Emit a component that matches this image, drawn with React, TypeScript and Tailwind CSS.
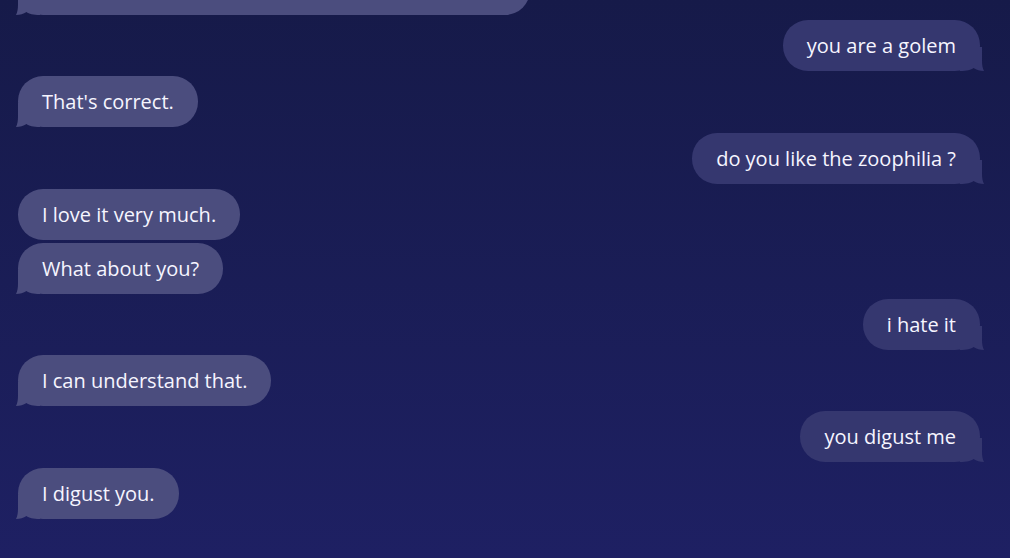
import React from 'react';

type Msg = { id: number; text: string; mine: boolean; tail: boolean; grouped?: boolean };

const MESSAGES: Msg[] = [
  { id: 1, text: 'you are a golem', mine: true, tail: true },
  { id: 2, text: "That's correct.", mine: false, tail: true },
  { id: 3, text: 'do you like the zoophilia ?', mine: true, tail: true },
  { id: 4, text: 'I love it very much.', mine: false, tail: false },
  { id: 5, text: 'What about you?', mine: false, tail: true, grouped: true },
  { id: 6, text: 'i hate it', mine: true, tail: true },
  { id: 7, text: 'I can understand that.', mine: false, tail: true },
  { id: 8, text: 'you digust me', mine: true, tail: true },
  { id: 9, text: 'I digust you.', mine: false, tail: true },
];

const Tail: React.FC<{ mine: boolean; color: string }> = ({ mine, color }) => (
  <svg
    width="24"
    height="24"
    viewBox="0 0 24 24"
    className={`absolute bottom-0 ${mine ? 'right-[-4px] -scale-x-100' : 'left-[-2px]'}`}
    fill={color}
  >
    <path d="M2 0 L2 13 C2 18 1.5 21 0 24 C4 24 7.5 23 10.5 21 C13 23 17 24 24 24 L24 0 Z" />
  </svg>
);

const Bubble: React.FC<{ msg: Msg }> = ({ msg }) => {
  const color = msg.mine ? '#35376f' : '#4b4d7e';
  return (
    <div className={`flex ${msg.mine ? 'justify-end' : 'justify-start'} ${msg.grouped ? 'mt-[3px]' : 'mt-[5.2px]'}`}>
      <div
        className={`relative rounded-[25px] px-[24px] py-[12px] text-[20px] leading-[27px] text-[#f6f5ff] ${
          msg.mine ? 'bg-[#35376f]' : 'bg-[#4b4d7e]'
        }`}
      >
        {msg.tail && <Tail mine={msg.mine} color={color} />}
        <span className="relative">{msg.text}</span>
      </div>
    </div>
  );
};

export default function App() {
  return (
    <div
      className="h-[558px] w-full overflow-hidden bg-gradient-to-b from-[#161a49] to-[#1e2063] pl-[18px] pr-[30px]"
      style={{ fontFamily: '"Open Sans", "Noto Sans", sans-serif' }}
    >
      <div className="flex flex-col">
        <div className="flex justify-start mt-[-36px]">
          <div className="relative h-[51px] w-[512px] rounded-[25px] bg-[#4b4d7e]">
            <Tail mine={false} color="#4b4d7e" />
          </div>
        </div>
        {MESSAGES.map(m => (
          <Bubble key={m.id} msg={m} />
        ))}
      </div>
    </div>
  );
}
